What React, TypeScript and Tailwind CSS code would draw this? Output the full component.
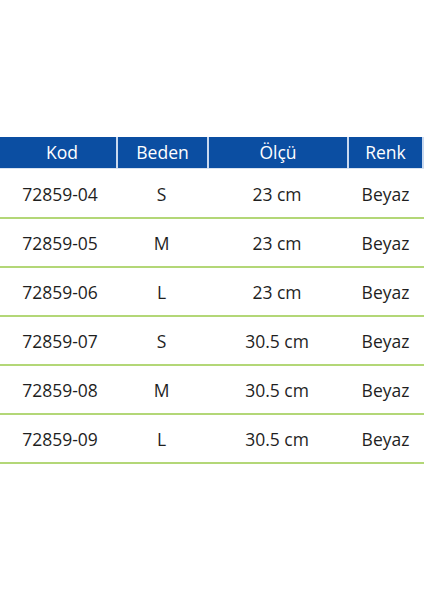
const rows = [
  { kod: "72859-04", beden: "S", olcu: "23 cm", renk: "Beyaz" },
  { kod: "72859-05", beden: "M", olcu: "23 cm", renk: "Beyaz" },
  { kod: "72859-06", beden: "L", olcu: "23 cm", renk: "Beyaz" },
  { kod: "72859-07", beden: "S", olcu: "30.5 cm", renk: "Beyaz" },
  { kod: "72859-08", beden: "M", olcu: "30.5 cm", renk: "Beyaz" },
  { kod: "72859-09", beden: "L", olcu: "30.5 cm", renk: "Beyaz" },
];

const cols = "grid grid-cols-[116px_91px_140px_77px]";

export default function App() {
  return (
    <div className="min-h-[600px] w-[424px] bg-white pt-[137px] font-['Open_Sans',sans-serif]">
      <div className={`${cols} h-[31px] bg-[#0b4ea2] text-[17.5px] font-medium text-white`}>
        <div className="flex items-center justify-center pl-[8px]">Kod</div>
        <div className="flex items-center justify-center border-l-2 border-[#c9d9ef]">Beden</div>
        <div className="flex items-center justify-center border-l-2 border-[#c9d9ef]">Ölçü</div>
        <div className="flex items-center justify-center border-l-2 border-r-2 border-[#c9d9ef]">Renk</div>
      </div>
      <div className="h-px bg-[#d7e2f0]" />
      {rows.map((r, i) => (
        <div
          key={r.kod}
          className={`${cols} ${i === 0 ? "h-[50px]" : "h-[49px]"} border-b-2 border-[#b3d777] pt-[2px] text-[17.5px] text-[#1f1f1f]`}
        >
          <div className="flex items-center justify-center pl-[4px]">{r.kod}</div>
          <div className="flex items-center justify-center">{r.beden}</div>
          <div className="flex items-center justify-center">{r.olcu}</div>
          <div className="flex items-center justify-center">{r.renk}</div>
        </div>
      ))}
    </div>
  );
}
